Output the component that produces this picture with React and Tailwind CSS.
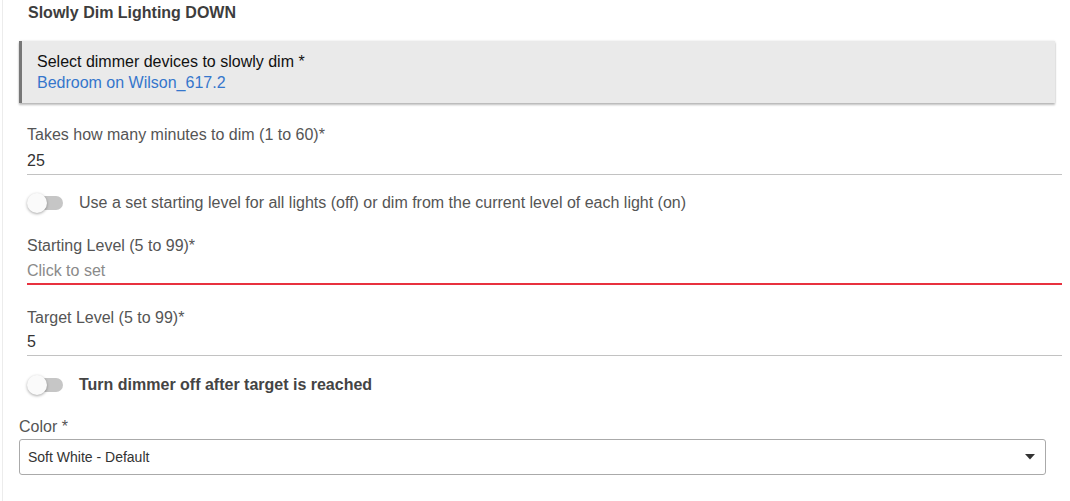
import React from 'react';

const font = { fontFamily: '"Liberation Sans", Arial, sans-serif' };

const Toggle = () => (
  <div className="relative w-[36px] h-[20px] shrink-0">
    <div className="absolute left-[2px] right-0 top-[3px] h-[14px] rounded-full bg-[#c6c6c6]"></div>
    <div className="absolute left-0 top-0 w-[20px] h-[20px] rounded-full bg-[#fafafa] shadow-[0_1px_3px_rgba(0,0,0,0.35)]"></div>
  </div>
);

const Field = ({ label, value, muted, className = '', valueClass = 'mt-[5px]' }) => (
  <div className={`ml-[24px] mr-[8px] ${className}`}>
    <div className="text-[16px] leading-[20px] text-[#555555]">{label}</div>
    <div className={`${valueClass} text-[16px] leading-[20px] ${muted ? 'text-[#8a8a8a]' : 'text-[#333333]'}`}>{value}</div>
  </div>
);

const ToggleRow = ({ children, bold, className = '' }) => (
  <div className={`ml-[24px] flex items-center h-[20px] ${className}`}>
    <Toggle />
    <span className={`ml-[16px] text-[16px] leading-[20px] ${bold ? 'font-bold text-[#444444]' : 'text-[#555555]'}`}>
      {children}
    </span>
  </div>
);

export default function App() {
  return (
    <div className="bg-white min-h-[501px] w-[1070px]" style={font}>
      <div className="ml-[2px] border-l border-[#ececec] min-h-[501px] pb-[20px]">
        <div className="h-[41px] pl-[25px] pt-[3px] text-[16px] leading-[20px] font-bold text-[#3d3d3d]">
          Slowly Dim Lighting DOWN
        </div>

        <div className="ml-[16px] mr-[15px] h-[62px] bg-[#eaeaea] border-l-[3px] border-[#777777] pl-[15px] pt-[10px] shadow-[0_2px_2px_rgba(0,0,0,0.25),0_0_2px_rgba(0,0,0,0.12)]">
          <div className="text-[16px] leading-[21px] text-[#111111]">Select dimmer devices to slowly dim *</div>
          <div className="text-[16px] leading-[21px] text-[#3576cc]">Bedroom on Wilson_617.2</div>
        </div>

        <Field
          className="mt-[22px] border-b border-[#c2c2c2] pb-[3px]"
          valueClass="mt-[6px]"
          label="Takes how many minutes to dim (1 to 60)*"
          value="25"
        />

        <ToggleRow className="mt-[18px]">
          Use a set starting level for all lights (off) or dim from the current level of each light (on)
        </ToggleRow>

        <Field
          className="mt-[23px] border-b-2 border-[#e8313f] pb-[2px]"
          label="Starting Level (5 to 99)*"
          value="Click to set"
          muted
        />

        <Field
          className="mt-[23px] border-b border-[#c2c2c2] pb-[3px]"
          valueClass="mt-[4px]"
          label="Target Level (5 to 99)*"
          value="5"
        />

        <ToggleRow className="mt-[19px]" bold>
          Turn dimmer off after target is reached
        </ToggleRow>

        <div className="ml-[16px] mt-[22px] text-[16px] leading-[20px] text-[#555555]">Color *</div>
        <div className="ml-[16px] mr-[24px] mt-[2px] h-[36px] border border-[#aaaaaa] rounded-[3px] flex items-center justify-between pl-[8px] pr-[10px]">
          <span className="text-[14px] text-[#333333]">Soft White - Default</span>
          <svg width="10" height="6" viewBox="0 0 10 6">
            <path d="M0 0 L10 0 L5 5.5 Z" fill="#333333" />
          </svg>
        </div>
      </div>
    </div>
  );
}
